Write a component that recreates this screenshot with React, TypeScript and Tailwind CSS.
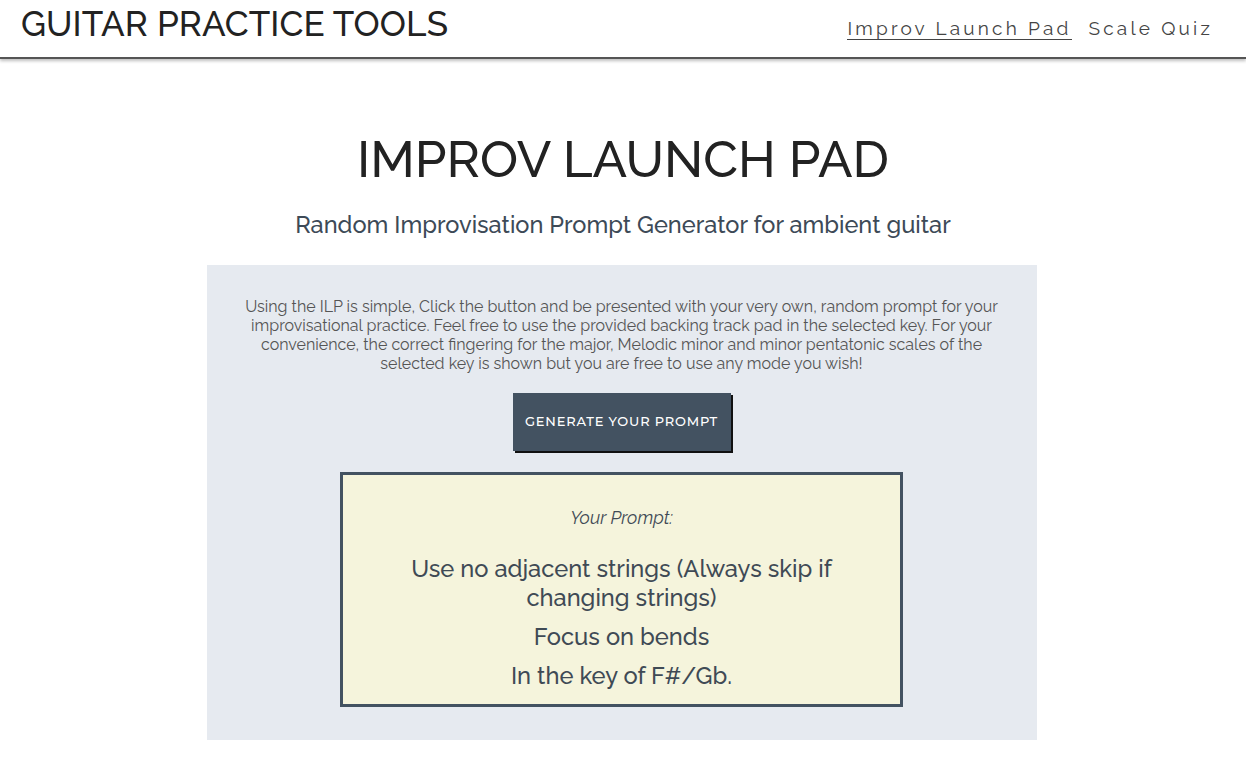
import React from "react";

export default function App() {
  const font = { fontFamily: "Raleway, Lato, 'Open Sans', sans-serif" };
  return (
    <div className="min-h-screen bg-white text-[#222]" style={font}>
      <header className="flex items-start justify-between h-[59px] border-b-2 border-[#555] shadow-[0_2px_3px_rgba(0,0,0,0.25)] pl-[21px] pr-[33px]">
        <h1 className="text-[35px] tracking-[0.1px] font-medium text-[#222] leading-none pt-[6px]">GUITAR PRACTICE TOOLS</h1>
        <nav className="flex gap-[17px] text-[19px] tracking-[3.2px] text-[#444] pt-[17px]">
          <a className="border-b border-[#444] leading-[22px]">Improv Launch Pad</a>
          <a className="leading-[22px]">Scale Quiz</a>
        </nav>
      </header>
      <main className="flex flex-col items-center">
        <h2 className="mt-[75px] text-[51px] font-medium leading-none text-[#222]">IMPROV LAUNCH PAD</h2>
        <h3 className="mt-[29px] text-[23.6px] font-medium leading-none text-[#3d4a57]">Random Improvisation Prompt Generator for ambient guitar</h3>
        <section className="mt-[27px] mr-[3px] w-[830px] bg-[#e6eaf0] flex flex-col items-center pt-[32px] pb-[33px] px-[38px] mb-[35px]">
          <p className="text-center text-[16px] leading-[19px] text-[#555]">
            Using the ILP is simple, Click the button and be presented with your very own, random prompt for your improvisational practice. Feel free to use the provided backing track pad in the selected key. For your convenience, the correct fingering for the major, Melodic minor and minor pentatonic scales of the selected key is shown but you are free to use any mode you wish!
          </p>
          <button className="mt-[20px] w-[218px] h-[58px] bg-[#435261] text-white text-[13px] tracking-[0.8px] font-medium shadow-[2px_2px_0_#111]" style={{ fontFamily: "Montserrat, 'Open Sans', sans-serif" }}>
            GENERATE YOUR PROMPT
          </button>
          <div className="mt-[21px] w-[563px] border-[3px] border-[#435261] bg-[#f5f4dc] flex flex-col items-center pt-[32px] pb-[13px] px-[60px] text-[#3f4a55] text-center">
            <p className="italic text-[18px] leading-[22px]">Your Prompt:</p>
            <p className="mt-[26px] text-[23.7px] font-medium leading-[29px]">Use no adjacent strings (Always skip if changing strings)</p>
            <p className="mt-[10px] text-[23.7px] font-medium leading-[29px]">Focus on bends</p>
            <p className="mt-[10px] text-[23.7px] font-medium leading-[29px]">In the key of F#/Gb.</p>
          </div>
        </section>
      </main>
    </div>
  );
}
